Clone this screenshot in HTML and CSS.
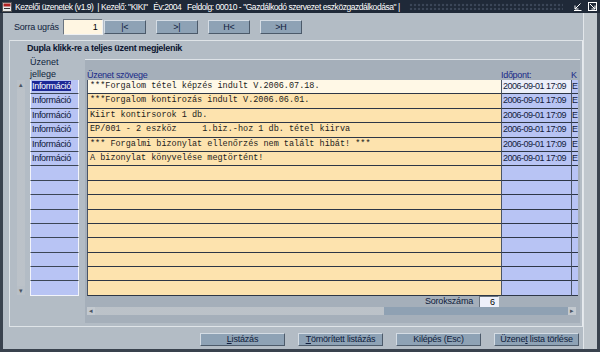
FILE: index.html
```html
<!DOCTYPE html>
<html lang="hu">
  <head>
    <meta charset="UTF-8" />
    <title>Kezelői üzenetek</title>
    <link rel="stylesheet" href="styles.css">
  </head>
  <body>
    <div class="window">
      <div class="titlebar">
        <svg class="app-icon" width="10" height="10" viewBox="0 0 10 10">
          <rect x="0.5" y="0.5" width="9" height="9" fill="#e8e8e8" stroke="#555" />
          <rect x="1.5" y="1.5" width="7" height="3" fill="#b02020" />
          <rect x="2" y="6" width="6" height="1" fill="#333" />
        </svg>
        <span class="title">Kezelői üzenetek (v1.9) &nbsp;| Kezelő: "KIKI" &nbsp; Év:2004 &nbsp; Feldolg: 00010 - "Gazdálkodó szervezet eszközgazdálkodása" |</span>
        <span class="title-fill"></span>
        <svg class="title-btn" width="9" height="9" viewBox="0 0 9 9">
          <path d="M7.5 1.5 L2 7 M2 3.5 V7 H5.5" stroke="#fff" fill="none" />
          <path d="M1 8.5 H8.5" stroke="#fff" />
        </svg>
        <svg class="title-btn" width="9" height="9" viewBox="0 0 9 9">
          <rect x="0.5" y="0.5" width="8" height="8" stroke="#fff" fill="none" />
          <path d="M2 2 L7 7 M7 3.5 V7 H3.5" stroke="#fff" fill="none" />
        </svg>
      </div>

      <div class="frame">
        <div class="client">
          <div class="toolbar">
            <span class="label">Sorra ugrás</span>
            <span class="field jump">1</span>
            <button class="btn nav">|&lt;</button>
            <button class="btn nav">&gt;|</button>
            <button class="btn nav">H&lt;</button>
            <button class="btn nav">&gt;H</button>
          </div>

          <div class="group">
            <div class="group-title">Dupla klikk-re a teljes üzent megjelenik</div>
            <div class="group-body">
              <div class="kind">
                <div class="kind-head">Üzenet<br>jellege</div>
                <div class="kind-body">
                  <div class="vscroll">
                    <span class="arrow">▴</span>
                    <span class="track"></span>
                    <span class="arrow">▾</span>
                  </div>
                  <div class="kind-list">
                    <div class="kind-cell"><span class="selected">Információ</span></div>
                    <div class="kind-cell">Információ</div>
                    <div class="kind-cell">Információ</div>
                    <div class="kind-cell">Információ</div>
                    <div class="kind-cell">Információ</div>
                    <div class="kind-cell">Információ</div>
                    <div class="kind-cell"></div>
                    <div class="kind-cell"></div>
                    <div class="kind-cell"></div>
                    <div class="kind-cell"></div>
                    <div class="kind-cell"></div>
                    <div class="kind-cell"></div>
                    <div class="kind-cell"></div>
                    <div class="kind-cell"></div>
                    <div class="kind-cell"></div>
                  </div>
                </div>
              </div>

              <div class="grid">
                <div class="grid-head">
                  <span class="col-msg">Üzenet szövege</span>
                  <span class="col-time">Időpont:</span>
                  <span class="col-k">K</span>
                </div>
                <div class="grid-rows">
                  <div class="row current"><span class="msg">***Forgalom tétel képzés indult V.2006.07.18.</span><span class="time">2006-09-01 17:09</span><span class="k">E</span></div>
                  <div class="row"><span class="msg">***Forgalom kontirozás indult V.2006.06.01.</span><span class="time">2006-09-01 17:09</span><span class="k">E</span></div>
                  <div class="row"><span class="msg">Kiirt kontirsorok 1 db.</span><span class="time">2006-09-01 17:09</span><span class="k">E</span></div>
                  <div class="row"><span class="msg">EP/001 - 2 eszköz &nbsp; &nbsp; 1.biz.-hoz 1 db. tétel kiirva</span><span class="time">2006-09-01 17:09</span><span class="k">E</span></div>
                  <div class="row"><span class="msg">*** Forgalmi bizonylat ellenőrzés nem talált hibát! ***</span><span class="time">2006-09-01 17:09</span><span class="k">E</span></div>
                  <div class="row"><span class="msg">A bizonylat könyvelése megtörtént!</span><span class="time">2006-09-01 17:09</span><span class="k">E</span></div>
                  <div class="row"><span class="msg"></span><span class="time"></span><span class="k"></span></div>
                  <div class="row"><span class="msg"></span><span class="time"></span><span class="k"></span></div>
                  <div class="row"><span class="msg"></span><span class="time"></span><span class="k"></span></div>
                  <div class="row"><span class="msg"></span><span class="time"></span><span class="k"></span></div>
                  <div class="row"><span class="msg"></span><span class="time"></span><span class="k"></span></div>
                  <div class="row"><span class="msg"></span><span class="time"></span><span class="k"></span></div>
                  <div class="row"><span class="msg"></span><span class="time"></span><span class="k"></span></div>
                  <div class="row"><span class="msg"></span><span class="time"></span><span class="k"></span></div>
                  <div class="row"><span class="msg"></span><span class="time"></span><span class="k"></span></div>
                </div>
                <div class="grid-foot">
                  <span class="label">Sorokszáma</span>
                  <span class="field count">6</span>
                </div>
                <div class="hscroll">
                  <span class="arrow">◂</span>
                  <span class="thumb"></span>
                  <span class="track"></span>
                  <span class="arrow">▸</span>
                </div>
              </div>
            </div>
          </div>

          <div class="actions">
            <button class="btn wide"><u>L</u>istázás</button>
            <button class="btn wide"><u>T</u>ömörített listázás</button>
            <button class="btn wide">Kilépés (Esc)</button>
            <button class="btn wide">Üzene<u>t</u> lista törlése</button>
          </div>
        </div>
        <div class="side"></div>
      </div>
    </div>
  </body>
</html>
```

FILE: styles.css
```css
body {
  margin: 0;
  width: 600px;
  height: 352px;
  overflow: hidden;
  background-color: #b3bcc5;
  font-family: "Liberation Sans", Arial, sans-serif;
  font-size: 9px;
  color: #0f1c3c;
}
.window {
  display: flex;
  flex-direction: column;
  height: 352px;
  box-sizing: border-box;
  border-left: 3px solid #39424e;
  border-right: 3px solid #39424e;
  border-bottom: 3px solid #39424e;
}
.titlebar {
  height: 13px;
  margin-left: -3px;
  margin-right: -3px;
  padding: 0 3px 0 2px;
  display: flex;
  align-items: center;
  gap: 3px;
  background-color: #1f2938;
  color: white;
}
.app-icon {
  flex: none;
}
.title {
  white-space: nowrap;
  font-size: 8.5px;
  letter-spacing: -0.45px;
}
.title-fill {
  flex: 1;
  height: 7px;
  margin: 0 4px 0 6px;
  background-image: radial-gradient(circle, transparent 0.6px, #6b7a90 0.9px, transparent 1.6px);
  background-size: 4px 4px;
}
.title-btn {
  flex: none;
  margin-left: 3px;
}
.frame {
  flex: 1;
  display: flex;
}
.client {
  width: 580px;
  display: flex;
  flex-direction: column;
}
.side {
  flex: 1;
  background-color: #c0c7cd;
  border-left: 1px solid #e2e6ea;
}
.toolbar {
  height: 27px;
  box-sizing: border-box;
  padding: 6px 0 0 11px;
  display: flex;
  align-items: flex-start;
}
.label {
  letter-spacing: -0.2px;
  line-height: 16px;
}
.field {
  display: block;
  box-sizing: border-box;
  background-color: #fff6e2;
  border: 1px solid #eef0f2;
  border-top-color: #6a7480;
  border-left-color: #6a7480;
  text-align: right;
  color: #000;
}
.jump {
  width: 40px;
  height: 16px;
  line-height: 14px;
  margin-left: 4px;
  padding-right: 4px;
}
.btn {
  font: inherit;
  color: #0f1c3c;
  background-color: #8ea2b5;
  border: 1px solid #4c5a6a;
  border-top-color: #d4dce4;
  border-left-color: #d4dce4;
  padding: 0;
  letter-spacing: -0.2px;
}
.nav {
  width: 42px;
  height: 14px;
  margin-top: 1px;
  margin-right: 10px;
  line-height: 12px;
}
.toolbar .field + .nav {
  margin-left: 1px;
}
.group {
  height: 287px;
  box-sizing: border-box;
  margin-left: 6px;
  border: 1px solid #dfe4e8;
  border-right-color: #e6eaee;
  display: flex;
  flex-direction: column;
}
.group-title {
  height: 12px;
  padding: 2px 0 0 17px;
  font-weight: bold;
  letter-spacing: -0.3px;
  color: #0c1530;
}
.group-body {
  flex: 1;
  display: flex;
}
.kind {
  width: 75px;
  display: flex;
  flex-direction: column;
}
.kind-head {
  height: 25px;
  padding: 1px 0 0 20px;
  box-sizing: border-box;
  line-height: 12px;
}
.kind-body {
  display: flex;
}
.vscroll {
  width: 8px;
  height: 215px;
  margin-left: 7px;
  display: flex;
  flex-direction: column;
  background-color: #c3c9cf;
  background-image: radial-gradient(circle, #aab2ba 0.5px, transparent 0.8px);
  background-size: 2px 2px;
}
.vscroll .arrow {
  height: 9px;
  font-size: 7px;
  line-height: 9px;
  text-align: center;
  color: #4a5462;
  background-color: #b9c0c7;
}
.vscroll .track {
  flex: 1;
}
.kind-list {
  width: 49px;
  margin-left: 5px;
  display: grid;
  grid-auto-rows: 14.4px;
}
.kind-cell {
  background-color: #b8c4f4;
  border-left: 1px solid #f2f4fa;
  border-right: 1px solid #f2f4fa;
  border-bottom: 1px solid #3c4656;
  padding-left: 1px;
  line-height: 13px;
  letter-spacing: -0.3px;
  white-space: nowrap;
  overflow: hidden;
  color: #0c1434;
}
.kind-cell:last-child {
  border-bottom-color: #f2f4fa;
}
.selected {
  background-color: #1c2896;
  color: white;
}
.grid {
  width: 495px;
  margin: 4px 0 3px 0;
  box-sizing: border-box;
  padding: 0 3px 0 2px;
  background-color: #a5afba;
  border-top: 1px solid #dde2e7;
  display: flex;
  flex-direction: column;
}
.grid-head {
  height: 20px;
  display: flex;
  align-items: flex-end;
  line-height: 10px;
  color: #1a2a88;
  letter-spacing: -0.3px;
}
.col-msg {
  width: 414px;
}
.col-time {
  width: 70px;
}
.grid-rows {
  display: grid;
  grid-auto-rows: 14.4px;
}
.row {
  display: flex;
}
.row span {
  box-sizing: border-box;
  border-left: 1px solid #4a5566;
  border-bottom: 1px solid #2e3746;
  white-space: nowrap;
  overflow: hidden;
}
.msg {
  width: 414px;
  padding-left: 2px;
  background-color: #fde3ae;
  font-family: "Liberation Mono", "Courier New", monospace;
  font-size: 8.5px;
  line-height: 13px;
  color: #1c1c1c;
}
.time {
  width: 70px;
  padding-left: 1px;
  background-color: #b8c4f4;
  line-height: 13px;
  letter-spacing: -0.5px;
  color: #141c3c;
}
.k {
  width: 7px;
  background-color: #b8c4f4;
  line-height: 13px;
  color: #141c3c;
}
.current .msg {
  background-color: #fff8e6;
}
.current .time {
  background-color: #eceff9;
}
.grid-foot {
  height: 11px;
  display: flex;
  justify-content: flex-end;
  padding-right: 78px;
  gap: 6px;
}
.grid-foot .label {
  line-height: 11px;
}
.count {
  width: 20px;
  height: 11px;
  line-height: 10px;
  padding-right: 3px;
  border-bottom: none;
  background-color: #eef0fa;
}
.hscroll {
  height: 8px;
  margin-right: 1px;
  display: flex;
  background-color: #8fa1b3;
}
.hscroll .arrow {
  width: 8px;
  font-size: 7px;
  line-height: 8px;
  text-align: center;
  color: #4a5462;
  background-color: #c3c9cf;
}
.hscroll .thumb {
  width: 289px;
  background-color: #c3c9cf;
  background-image: radial-gradient(circle, #aab2ba 0.5px, transparent 0.8px);
  background-size: 2px 2px;
}
.hscroll .track {
  flex: 1;
}
.actions {
  flex: 1;
  display: flex;
  justify-content: flex-end;
  align-items: flex-start;
  gap: 13px;
  padding: 6px 4px 0 0;
}
.wide {
  width: 85px;
  height: 13px;
  line-height: 11px;
}
```
